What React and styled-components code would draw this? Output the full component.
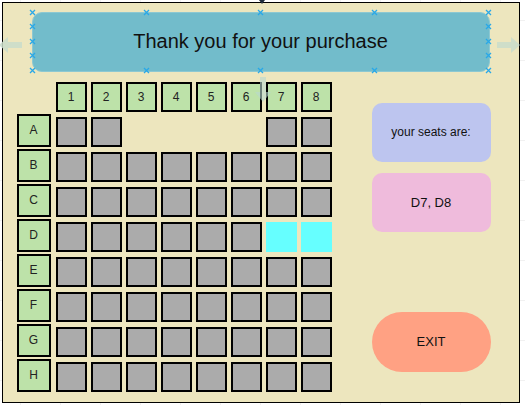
import React from "react";
import styled, { createGlobalStyle } from "styled-components";

const GlobalStyle = createGlobalStyle`
  html, body {
    margin: 0;
    padding: 0;
    background: #ffffff;
    font-family: "Liberation Sans", Arial, sans-serif;
  }
`;

const Page = styled.div`
  width: 525px;
  height: 405px;
  position: relative;
  overflow: hidden;
  background-color: #ffffff;
  background-image: linear-gradient(#f1f1f1 1px, transparent 1px),
    linear-gradient(90deg, #f1f1f1 1px, transparent 1px);
  background-size: 40px 40px;
  background-position: -20px -20px;
`;

const Frame = styled.div`
  position: relative;
  box-sizing: border-box;
  margin: 2px 0 0 2px;
  width: 518px;
  height: 401px;
  border: 1.5px solid #000;
  background: #ede6be;
  padding: 8.5px 0 0 13.5px;
  display: flex;
  flex-direction: column;
`;

const Header = styled.div`
  position: relative;
  box-sizing: border-box;
  margin-left: 15px;
  width: 458px;
  height: 60px;
  border-radius: 10px;
  background: #72bccb;
  border: 1px solid #8cc8d2;
  display: flex;
  align-items: center;
  justify-content: center;
  font-size: 20px;
  color: #111;
`;

const Marker = styled.span`
  position: absolute;
  width: 7px;
  height: 7px;
  margin: -4px 0 0 -4px;
  display: block;
  line-height: 0;

  svg {
    display: block;
  }
`;

const SideArrow = styled.svg`
  position: absolute;
  top: 32px;
`;

const Body = styled.div`
  display: flex;
  margin-top: 10px;
`;

const SeatGrid = styled.div`
  display: grid;
  grid-template-columns: 35px repeat(8, 31px);
  grid-template-rows: 30px repeat(8, 33px);
  column-gap: 4px;
  row-gap: 2px;
`;

const Corner = styled.div``;

const Label = styled.div`
  box-sizing: border-box;
  background: #bde2a9;
  border: 2px solid #000;
  display: flex;
  align-items: center;
  justify-content: center;
  font-size: 12px;
  color: #222;
  width: ${(p) => (p.$row ? "34px" : "31px")};
  height: ${(p) => (p.$row ? "33px" : "30px")};
`;

const Seat = styled.div`
  box-sizing: border-box;
  align-self: end;
  width: 31px;
  height: 30px;
  background: ${(p) => (p.$picked ? "#66ffff" : "#ababab")};
  border: ${(p) => (p.$picked ? "none" : "2px solid #000")};
  visibility: ${(p) => (p.$gone ? "hidden" : "visible")};
`;

const Side = styled.div`
  box-sizing: border-box;
  margin-left: 40px;
  width: 119px;
  height: 310px;
  padding: 21px 0 20px;
  display: flex;
  flex-direction: column;
  gap: 11px;
`;

const InfoBox = styled.div`
  height: 59px;
  border-radius: 10px;
  background: ${(p) => p.$bg};
  display: flex;
  align-items: center;
  justify-content: center;
  font-size: ${(p) => p.$size || "12px"};
  color: #111;
`;

const ExitButton = styled.button`
  margin-top: auto;
  height: 60px;
  border: none;
  border-radius: 30px;
  background: #ffa183;
  font-family: "Liberation Sans", Arial, sans-serif;
  font-size: 13px;
  color: #111;
  padding: 0;
`;

const FloatArrow = styled.svg`
  position: absolute;
`;

const cols = [1, 2, 3, 4, 5, 6, 7, 8];
const rows = ["A", "B", "C", "D", "E", "F", "G", "H"];
const picked = ["D7", "D8"];
const spots = [0, 25, 50, 75, 100];

const Cross = () => (
  <svg width="7" height="7" viewBox="0 0 7 7">
    <path d="M1 1 L6 6 M6 1 L1 6" stroke="#29a8e8" strokeWidth="1.3" />
  </svg>
);

export default function App() {
  const markers = [];
  spots.forEach((s) => {
    markers.push({ left: s + "%", top: "0%" });
    markers.push({ left: s + "%", top: "100%" });
    if (s > 0 && s < 100) {
      markers.push({ left: "0%", top: s + "%" });
      markers.push({ left: "100%", top: s + "%" });
    }
  });

  return (
    <Page>
      <GlobalStyle />
      <Frame>
        <FloatArrow width="10" height="5" style={{ left: 254, top: -3 }} viewBox="0 0 10 5">
          <path d="M2 0 L8 0 L5 4 Z" fill="#1d2b3a" />
        </FloatArrow>
        <SideArrow width="24" height="20" viewBox="0 0 24 20" style={{ left: -4 }}>
          <path d="M0 10 L9 2 L9 7 L23 7 L23 13 L9 13 L9 18 Z" fill="#c9dccb" opacity="0.85" />
        </SideArrow>
        <SideArrow width="24" height="20" viewBox="0 0 24 20" style={{ left: 493 }}>
          <path d="M24 10 L15 2 L15 7 L1 7 L1 13 L15 13 L15 18 Z" fill="#c9dccb" opacity="0.85" />
        </SideArrow>
        <FloatArrow width="20" height="26" viewBox="0 0 20 26" style={{ left: 250, top: 74 }}>
          <path d="M10 25 L2 15 L7 15 L7 0 L13 0 L13 15 L18 15 Z" fill="#b7d8d0" opacity="0.6" />
        </FloatArrow>
        <Header>
          Thank you for your purchase
          {markers.map((m, i) => (
            <Marker key={i} style={{ left: m.left, top: m.top }}>
              <Cross />
            </Marker>
          ))}
        </Header>
        <Body>
          <SeatGrid>
            <Corner />
            {cols.map((c) => (
              <Label key={c}>{c}</Label>
            ))}
            {rows.map((r) => (
              <React.Fragment key={r}>
                <Label $row>{r}</Label>
                {cols.map((c) => (
                  <Seat
                    key={r + c}
                    $gone={r === "A" && c >= 3 && c <= 6}
                    $picked={picked.includes(r + c)}
                  />
                ))}
              </React.Fragment>
            ))}
          </SeatGrid>
          <Side>
            <InfoBox $bg="#bdc5ef">your seats are:</InfoBox>
            <InfoBox $bg="#efbbdc" $size="13px">
              D7, D8
            </InfoBox>
            <ExitButton>EXIT</ExitButton>
          </Side>
        </Body>
      </Frame>
    </Page>
  );
}
